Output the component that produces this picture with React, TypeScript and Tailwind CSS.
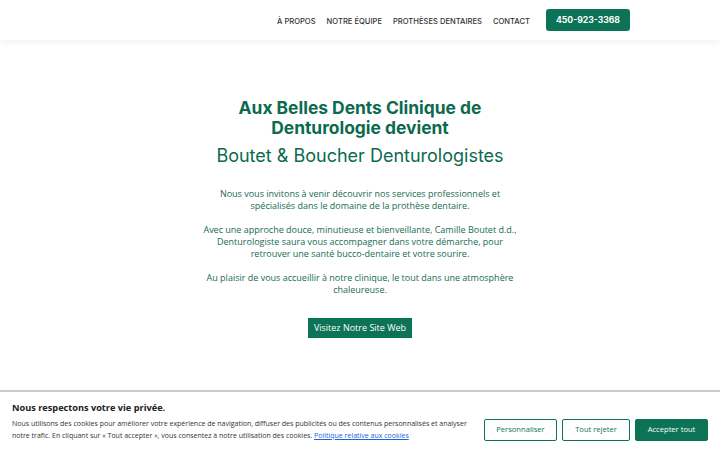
export default function App() {
  const navItems = ["À PROPOS", "NOTRE ÉQUIPE", "PROTHÈSES DENTAIRES", "CONTACT"];

  return (
    <div className="flex h-[450px] w-[720px] flex-col overflow-hidden bg-white">
      {/* Header */}
      <header className="relative z-10 flex h-[40px] shrink-0 items-center justify-end bg-white pr-[90px] shadow-[0_2px_6px_rgba(0,0,0,0.06)]">
        <nav className="flex items-center gap-[11px] pt-[3px]">
          {navItems.map((item) => (
            <a
              key={item}
              href="#"
              className="font-['Inter',sans-serif] text-[7.6px] font-medium text-[#333333]"
            >
              {item}
            </a>
          ))}
        </nav>
        <a
          href="#"
          className="ml-[16px] flex h-[22px] w-[84px] items-center justify-center rounded-[3px] bg-[#0c7356] font-['Inter',sans-serif] text-[8.6px] font-bold text-white"
        >
          450-923-3368
        </a>
      </header>

      {/* Main */}
      <main className="flex h-[350px] shrink-0 flex-col items-center pt-[58px] text-center">
        <h1 className="font-['Inter',sans-serif] text-[17.4px] font-bold leading-[20px] text-[#0b6a4f]">
          Aux Belles Dents Clinique de
          <br />
          Denturologie devient
        </h1>
        <h2 className="mt-[7px] font-['Inter',sans-serif] text-[18px] font-normal leading-[22px] text-[#0b6a4f]">
          Boutet &amp; Boucher Denturologistes
        </h2>
        <div className="mt-[21px] flex w-[330px] flex-col gap-[12px] font-['Open_Sans',sans-serif] text-[9px] leading-[12px] text-[#176b53]">
          <p>
            Nous vous invitons à venir découvrir nos services professionnels et
            <br />
            spécialisés dans le domaine de la prothèse dentaire.
          </p>
          <p>
            Avec une approche douce, minutieuse et bienveillante, Camille Boutet d.d.,
            <br />
            Denturologiste saura vous accompagner dans votre démarche, pour
            <br />
            retrouver une santé bucco-dentaire et votre sourire.
          </p>
          <p>
            Au plaisir de vous accueillir à notre clinique, le tout dans une atmosphère
            <br />
            chaleureuse.
          </p>
        </div>
        <a
          href="#"
          className="mt-[22px] flex h-[20px] w-[104px] items-center justify-center bg-[#0c7356] font-['Open_Sans',sans-serif] text-[9px] text-white"
        >
          Visitez Notre Site Web
        </a>
      </main>

      {/* Cookie banner */}
      <section className="flex flex-1 items-start border-t-2 border-[#c9cdd0] bg-white px-[12px] pt-[9px] font-['Open_Sans',sans-serif]">
        <div className="flex-1">
          <p className="text-[9.2px] font-bold leading-[14px] text-[#212121]">
            Nous respectons votre vie privée.
          </p>
          <p className="mt-[3px] w-[470px] text-[7px] leading-[12px] text-[#333333]">
            Nous utilisons des cookies pour améliorer votre expérience de navigation, diffuser des publicités ou des contenus personnalisés et analyser
            <br />
            notre trafic. En cliquant sur « Tout accepter », vous consentez à notre utilisation des cookies.{" "}
            <a href="#" className="text-[#1863dc] underline">
              Politique relative aux cookies
            </a>
          </p>
        </div>
        <div className="mt-[18px] flex gap-[5px]">
          <button className="flex h-[22px] w-[73px] items-center justify-center rounded-[2px] border-[1.5px] border-[#0c7356] bg-white text-[7.6px] text-[#0c7356]">
            Personnaliser
          </button>
          <button className="flex h-[22px] w-[68px] items-center justify-center rounded-[2px] border-[1.5px] border-[#0c7356] bg-white text-[7.6px] text-[#0c7356]">
            Tout rejeter
          </button>
          <button className="flex h-[22px] w-[73px] items-center justify-center rounded-[2px] border-[1.5px] border-[#0c7356] bg-[#0c7356] text-[7.6px] text-white">
            Accepter tout
          </button>
        </div>
      </section>
    </div>
  );
}
